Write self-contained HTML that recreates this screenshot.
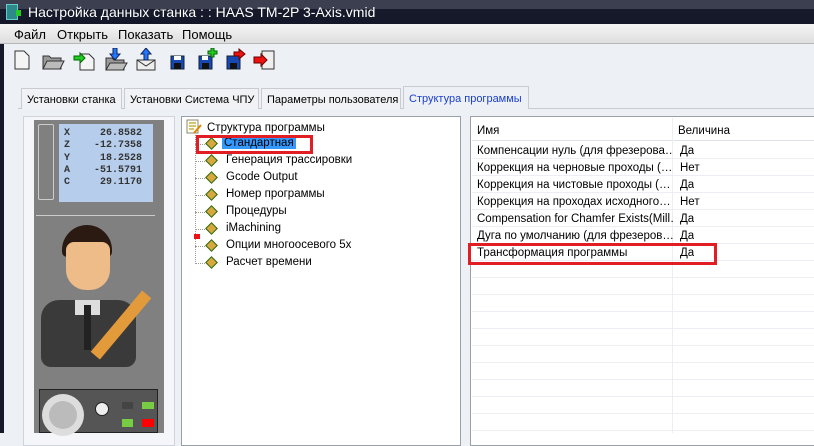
<!DOCTYPE html><html><head><meta charset="utf-8"><style>
*{margin:0;padding:0;box-sizing:border-box}
body{width:814px;height:433px;overflow:hidden;background:#edf0f5;font-family:"Liberation Sans",sans-serif;font-size:11.5px;position:relative;color:#000}
.a{position:absolute}
.title{left:0;top:0;width:814px;height:24px;background:linear-gradient(#3c3f4f 0,#3c3f4f 9px,#161a2b 9px,#141829 100%);color:#fff;font-size:14px}
.menu{left:0;top:24px;width:814px;height:20px;background:linear-gradient(#f5f5f5,#dedede);border-bottom:1px solid #b8b8b8;font-size:13px}
.menu span{position:absolute;top:3px}
.tab{top:88px;height:21px;border:1px solid #c8ccd2;border-bottom:none;background:#f0f2f5;padding:5px 5px;font-size:11px;white-space:nowrap;overflow:hidden}
.tree div{position:absolute;left:26px;white-space:nowrap}
.dia{position:absolute;left:9px;width:9px;height:9px;background:#d6a83e;border:1.5px solid #2a6a10;transform:rotate(45deg)}
.row{position:absolute;left:0;width:344px;height:17px;border-bottom:1px solid #eceef3}
.row span{position:absolute;top:3px;white-space:nowrap;overflow:hidden}
</style></head><body>
<div class="a title"><div class="a" style="left:6px;top:4px;width:12px;height:16px;background:#2c8a8a;border:1px solid #6cc"></div><div class="a" style="left:16px;top:10px;width:5px;height:6px;background:#2c2"></div><span class="a" style="left:28px;top:4px">Настройка данных станка : : HAAS TM-2P 3-Axis.vmid</span></div>
<div class="a" style="left:0;top:24px;width:4px;height:409px;background:#15192a"></div>
<div class="a menu"><span style="left:14px">Файл</span><span style="left:57px">Открыть</span><span style="left:118px">Показать</span><span style="left:182px">Помощь</span></div>
<div class="a" style="left:4px;top:45px;width:810px;height:388px;background:#edf0f5"></div>
<svg class="a" style="left:10px;top:48px" width="275" height="26">
<path d="M5 3h9l5 5v13H5z" fill="#f4f4f4" stroke="#333"/>
<path d="M33 8h6l2 2h10v11H33z" fill="#999" stroke="#333"/><path d="M33 21l4-8h17l-4 8z" fill="#bbb" stroke="#333"/>
<path d="M70 6h9l5 5v11H70z" fill="#f4f4f4" stroke="#333"/><path d="M64 8h6v-3l5 5-5 5v-3h-6z" fill="#2c2" stroke="#060"/>
<path d="M96 10h6l2 2h10v10H96z" fill="#999" stroke="#333"/><path d="M96 22l4-7h17l-4 7z" fill="#bbb" stroke="#333"/><path d="M103 0h4v6h3l-5 6-5-6h3z" fill="#27f" stroke="#125"/>
<path d="M127 12h18v10h-18z" fill="#eee" stroke="#333"/><path d="M127 12l9 6 9-6" fill="none" stroke="#333"/><path d="M134 12V6h-3l5-6 5 6h-3v6z" fill="#27f" stroke="#125"/>
<rect x="161" y="8" width="13" height="13" fill="#1747b0" stroke="#123"/><rect x="164" y="8" width="7" height="4" fill="#fff"/><rect x="164" y="15" width="7" height="6" fill="#111"/>
<rect x="189" y="8" width="13" height="13" fill="#1747b0" stroke="#123"/><rect x="192" y="8" width="6" height="4" fill="#fff"/><rect x="192" y="15" width="7" height="6" fill="#111"/><path d="M198 3h3v-3h3v3h3v3h-3v3h-3v-3h-3z" fill="#2c2" stroke="#060"/>
<rect x="217" y="8" width="13" height="13" fill="#1747b0" stroke="#123"/><rect x="220" y="15" width="7" height="6" fill="#111"/><path d="M224 4h5v-3l6 5-6 5v-3h-5z" fill="#e11" stroke="#600"/>
<rect x="252" y="3" width="12" height="18" fill="#eee" stroke="#333"/><path d="M244 9h7v-3l6 6-6 6v-3h-7z" fill="#e11" stroke="#600"/>
</svg>
<div class="a" style="left:18px;top:108px;width:796px;height:1px;background:#c8ccd2"></div>
<div class="a tab" style="left:21px;width:101px">Установки станка</div>
<div class="a tab" style="left:124px;width:135px">Установки Система ЧПУ</div>
<div class="a tab" style="left:261px;width:140px">Параметры пользователя</div>
<div class="a tab" style="left:403px;width:126px;color:#1a3fd0;background:#edf0f5;top:86px;height:23px;padding-top:6px">Структура программы</div>
<div class="a" style="left:23px;top:116px;width:152px;height:330px;border:1px solid #d0d4da;background:#f4f6f9"></div>
<div class="a" style="left:34px;top:120px;width:130px;height:313px;background:#808080"></div>
<div class="a" style="left:38px;top:124px;width:16px;height:76px;border:1px solid #ccc;border-radius:2px"></div>
<div class="a" style="left:59px;top:124px;width:94px;height:78px;background:#b6cdec;font-family:'Liberation Mono',monospace;font-size:10px;font-weight:bold;color:#333;line-height:12.3px;padding:4px 0 0 5px;white-space:pre">X     26.8582
Z    -12.7358
Y     18.2528
A    -51.5791
C     29.1170</div>
<div class="a" style="left:36px;top:215px;width:119px;height:1px;background:#ccc"></div>
<div class="a" style="left:62px;top:225px;width:50px;height:32px;background:#2a1a12;border-radius:25px 25px 5px 5px"></div>
<div class="a" style="left:66px;top:242px;width:44px;height:48px;background:#eebc88;border-radius:8px 8px 20px 20px"></div>
<div class="a" style="left:41px;top:300px;width:95px;height:67px;background:#3a3a3a;border-radius:18px 18px 10px 10px"></div>
<div class="a" style="left:75px;top:300px;width:25px;height:15px;background:#ddd"></div>
<div class="a" style="left:84px;top:305px;width:7px;height:45px;background:#222"></div>
<div class="a" style="left:115px;top:285px;width:12px;height:80px;background:#e39a3a;transform:rotate(40deg)"></div>
<div class="a" style="left:39px;top:389px;width:119px;height:44px;background:#555;border:1px solid #222"></div>
<div class="a" style="left:42px;top:394px;width:42px;height:42px;border-radius:50%;background:#ddd"></div>
<div class="a" style="left:49px;top:401px;width:28px;height:28px;border-radius:50%;background:#bbb"></div>
<div class="a" style="left:95px;top:402px;width:14px;height:14px;border-radius:50%;background:#eee;border:1px solid #222"></div>
<div class="a" style="left:122px;top:402px;width:11px;height:7px;background:#444"></div>
<div class="a" style="left:142px;top:402px;width:12px;height:7px;background:#7c4"></div>
<div class="a" style="left:122px;top:419px;width:11px;height:8px;background:#7c4"></div>
<div class="a" style="left:142px;top:419px;width:12px;height:8px;background:#f00"></div>
<div class="a" style="left:181px;top:116px;width:280px;height:330px;background:#fff;border:1px solid #9aa0a8"></div>
<svg class="a" style="left:186px;top:119px" width="16" height="16"><rect x="1" y="1" width="11" height="13" fill="#ffe" stroke="#887"/><path d="M3 4h7M3 7h7M3 10h5" stroke="#a80"/><path d="M8 14l7-8" stroke="#d80" stroke-width="2"/></svg>
<div class="a" style="left:195px;top:135px;width:0;height:129px;border-left:1px dotted #999"></div>
<div class="a tree" style="left:181px;top:120px;width:280px;height:160px">
<div style="top:2px">Структура программы</div>
</div>
<div class="a" style="left:186px;top:120px;width:280px;height:160px">
<div class="a" style="left:9px;top:24px;width:12px;border-top:1px dotted #999"></div>
<div class="dia" style="left:21px;top:19px"></div><div class="a" style="left:36px;top:17px;background:#3399ff;padding:0 2px;color:#000">Стандартная</div>
<div class="a" style="left:9px;top:41px;width:12px;border-top:1px dotted #999"></div><div class="dia" style="left:21px;top:36px"></div><div class="a" style="left:40px;top:34px">Генерация трассировки</div>
<div class="a" style="left:9px;top:58px;width:12px;border-top:1px dotted #999"></div><div class="dia" style="left:21px;top:53px"></div><div class="a" style="left:40px;top:51px">Gcode Output</div>
<div class="a" style="left:9px;top:75px;width:12px;border-top:1px dotted #999"></div><div class="dia" style="left:21px;top:70px"></div><div class="a" style="left:40px;top:68px">Номер программы</div>
<div class="a" style="left:9px;top:92px;width:12px;border-top:1px dotted #999"></div><div class="dia" style="left:21px;top:87px"></div><div class="a" style="left:40px;top:85px">Процедуры</div>
<div class="a" style="left:9px;top:109px;width:12px;border-top:1px dotted #999"></div><div class="dia" style="left:21px;top:104px"></div><div class="a" style="left:40px;top:102px">iMachining</div>
<div class="a" style="left:9px;top:126px;width:12px;border-top:1px dotted #999"></div><div class="dia" style="left:21px;top:121px"></div><div class="a" style="left:40px;top:119px">Опции многоосевого 5x</div>
<div class="a" style="left:9px;top:143px;width:12px;border-top:1px dotted #999"></div><div class="dia" style="left:21px;top:138px"></div><div class="a" style="left:40px;top:136px">Расчет времени</div>
<div class="a" style="left:8px;top:114px;width:6px;height:5px;background:#e11"></div>
</div>
<div class="a" style="left:196px;top:135px;width:117px;height:19px;border:3px solid #e01e24"></div>
<div class="a" style="left:470px;top:116px;width:344px;height:330px;background:#fff;border:1px solid #9aa0a8;border-right:none"></div>
<div class="a" style="left:472px;top:118px;width:342px;height:23px;border-bottom:1px solid #dfe2e8"><span class="a" style="left:5px;top:7px">Имя</span><span class="a" style="left:206px;top:7px">Величина</span></div>
<div class="a" style="left:672px;top:118px;width:1px;height:315px;background:#eceef3"></div>
<div class="a" style="left:472px;top:142px;width:342px;height:291px">
<div class="row" style="top:0"><span style="left:5px;width:196px">Компенсации нуль (для фрезерова…</span><span style="left:208px">Да</span></div>
<div class="row" style="top:17px"><span style="left:5px;width:196px">Коррекция на черновые проходы (…</span><span style="left:208px">Нет</span></div>
<div class="row" style="top:34px"><span style="left:5px;width:196px">Коррекция на чистовые проходы (…</span><span style="left:208px">Да</span></div>
<div class="row" style="top:51px"><span style="left:5px;width:196px">Коррекция на проходах исходного…</span><span style="left:208px">Нет</span></div>
<div class="row" style="top:68px"><span style="left:5px;width:196px">Compensation for Chamfer Exists(Mill…</span><span style="left:208px">Да</span></div>
<div class="row" style="top:85px"><span style="left:5px;width:196px">Дуга по умолчанию (для фрезеров…</span><span style="left:208px">Да</span></div>
<div class="row" style="top:102px"><span style="left:5px">Трансформация программы</span><span style="left:208px">Да</span></div>
<div class="row" style="top:119px"></div><div class="row" style="top:136px"></div><div class="row" style="top:153px"></div><div class="row" style="top:170px"></div><div class="row" style="top:187px"></div><div class="row" style="top:204px"></div><div class="row" style="top:221px"></div><div class="row" style="top:238px"></div><div class="row" style="top:255px"></div><div class="row" style="top:272px"></div>
</div>
<div class="a" style="left:468px;top:243px;width:249px;height:22px;border:3px solid #e01e24"></div>
</body></html>
